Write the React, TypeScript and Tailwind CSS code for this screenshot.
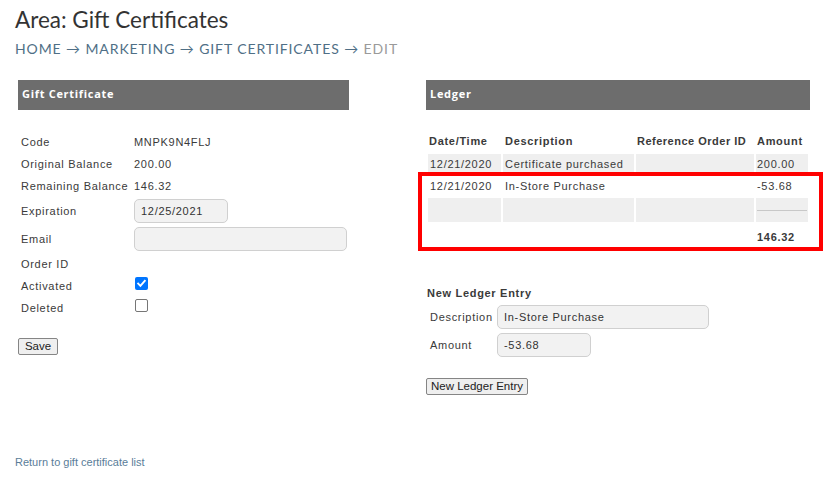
import React from "react";

function Check({ checked }: { checked: boolean }) {
  if (checked) {
    return (
      <div className="w-[13px] h-[13px] rounded-[2px] bg-[#0075ff] flex items-center justify-center">
        <svg width="11" height="11" viewBox="0 0 11 11">
          <path d="M2.2 5.6 L4.4 7.8 L8.8 2.8" fill="none" stroke="white" strokeWidth="1.9" strokeLinecap="square" />
        </svg>
      </div>
    );
  }
  return <div className="w-[13px] h-[13px] rounded-[2px] border border-[#767676] bg-white" />;
}

const inputCls =
  "h-[24px] bg-[#f2f2f2] border border-[#d0d0d0] rounded-[5px] px-[6px] flex items-center text-[11px] tracking-[0.7px] text-[#333]";

export default function App() {
  return (
    <div className="w-[840px] h-[480px] bg-white font-['Liberation_Sans',Arial,sans-serif] text-[11px] tracking-[0.7px] text-[#3a3a3a] overflow-hidden">
      <div className="pl-[15px] pt-[7px]">
        <div className="font-['Lato',sans-serif] text-[22.5px] leading-[26px] tracking-normal text-[#333]">
          Area: Gift Certificates
        </div>
        <div className="mt-[7px] font-['Lato',sans-serif] text-[14px] leading-[17px] tracking-[0.9px] text-[#4f6f86]">
          HOME <span>→</span> MARKETING <span>→</span> GIFT CERTIFICATES <span>→</span>{" "}
          <span className="text-[#9a9a9a]">EDIT</span>
        </div>
      </div>

      <div className="flex pl-[18px] mt-[23px] gap-[77px] items-start">
        {/* Left column */}
        <div className="w-[331px]">
          <div className="h-[30px] bg-[#6d6d6d] flex items-center pb-[1px] pl-[4px] font-['Open_Sans',sans-serif] font-bold text-[11px] tracking-[0.7px] text-white">
            Gift Certificate
          </div>
          <div className="mt-[21px] pl-[3px] grid grid-cols-[113px_1fr]">
            <div className="h-[22px] flex items-center">Code</div>
            <div className="h-[22px] flex items-center">MNPK9N4FLJ</div>
            <div className="h-[22px] flex items-center">Original Balance</div>
            <div className="h-[22px] flex items-center">200.00</div>
            <div className="h-[22px] flex items-center">Remaining Balance</div>
            <div className="h-[22px] flex items-center">146.32</div>
            <div className="h-[28px] flex items-center">Expiration</div>
            <div className="h-[28px] flex items-center">
              <div className={inputCls + " w-[94px]"}>12/25/2021</div>
            </div>
            <div className="h-[28px] flex items-center">Email</div>
            <div className="h-[28px] flex items-center">
              <div className={inputCls + " w-[213px]"}></div>
            </div>
            <div className="h-[22px] flex items-center">Order ID</div>
            <div className="h-[22px]"></div>
            <div className="h-[22px] flex items-center">Activated</div>
            <div className="h-[22px] pt-[2px] pl-[1px]">
              <Check checked={true} />
            </div>
            <div className="h-[22px] flex items-center">Deleted</div>
            <div className="h-[22px] pt-[2px] pl-[1px]">
              <Check checked={false} />
            </div>
          </div>
          <button className="mt-[19px] w-[40px] h-[17px] bg-[#efefef] border border-[#858585] rounded-[2px] text-[11.5px] tracking-normal text-[#222] flex items-center justify-center leading-none">
            Save
          </button>
        </div>

        {/* Right column */}
        <div className="w-[384px] relative">
          <div className="h-[30px] bg-[#6d6d6d] flex items-center pb-[1px] pl-[4px] font-['Open_Sans',sans-serif] font-bold text-[11px] tracking-[0.7px] text-white">
            Ledger
          </div>
          <table className="mt-[19px] border-separate border-spacing-[2px] w-[384px] table-fixed">
            <colgroup>
              <col className="w-[73px]" />
              <col className="w-[131px]" />
              <col className="w-[118px]" />
              <col className="w-[52px]" />
            </colgroup>
            <thead>
              <tr className="h-[21px] font-bold text-left">
                <th className="p-0 pl-[1px] font-bold text-left">Date/Time</th>
                <th className="p-0 pl-[2px] font-bold text-left">Description</th>
                <th className="p-0 pl-[1px] font-bold text-left whitespace-nowrap tracking-[0.5px]">Reference Order ID</th>
                <th className="p-0 pl-[1px] font-bold text-left">Amount</th>
              </tr>
            </thead>
            <tbody>
              <tr className="h-[20px]">
                <td className="p-0 pl-[2px] bg-[#efefef]">12/21/2020</td>
                <td className="p-0 pl-[2px] bg-[#efefef] whitespace-nowrap">Certificate purchased</td>
                <td className="p-0 bg-[#efefef]"></td>
                <td className="p-0 pl-[1px] bg-[#efefef]">200.00</td>
              </tr>
              <tr className="h-[20px]">
                <td className="p-0 pl-[2px]">12/21/2020</td>
                <td className="p-0 pl-[2px]">In-Store Purchase</td>
                <td className="p-0"></td>
                <td className="p-0 pl-[1px]">-53.68</td>
              </tr>
              <tr className="h-[24px]">
                <td className="p-0 bg-[#efefef]"></td>
                <td className="p-0 bg-[#efefef]"></td>
                <td className="p-0 bg-[#efefef]"></td>
                <td className="p-0 bg-[#efefef]">
                  <div className="h-px bg-[#c8c8c8] mx-[1px]"></div>
                </td>
              </tr>
              <tr className="h-[26px]">
                <td className="p-0"></td>
                <td className="p-0"></td>
                <td className="p-0"></td>
                <td className="p-0 pl-[1px] font-bold">146.32</td>
              </tr>
            </tbody>
          </table>

          <div className="absolute left-[-8px] top-[92px] w-[405px] h-[79px] border-[4px] border-[#ff0000]"></div>

          <div className="mt-[34px] pl-[1px] font-bold leading-[14px]">New Ledger Entry</div>
          <div className="mt-[3px] grid grid-cols-[71px_1fr]">
            <div className="h-[28px] flex items-center pl-[4px]">Description</div>
            <div className="h-[28px] flex items-center">
              <div className={inputCls + " w-[212px]"}>In-Store Purchase</div>
            </div>
            <div className="h-[28px] flex items-center pl-[4px]">Amount</div>
            <div className="h-[28px] flex items-center">
              <div className={inputCls + " w-[94px]"}>-53.68</div>
            </div>
          </div>
          <button className="mt-[19px] w-[102px] h-[17px] bg-[#efefef] border border-[#858585] rounded-[2px] text-[11.5px] tracking-normal text-[#222] flex items-center justify-center leading-none">
            New Ledger Entry
          </button>
        </div>
      </div>

      <div className="pl-[15px] mt-[61px] text-[11px] tracking-normal leading-[13px] text-[#5a7d99]">
        Return to gift certificate list
      </div>
    </div>
  );
}
